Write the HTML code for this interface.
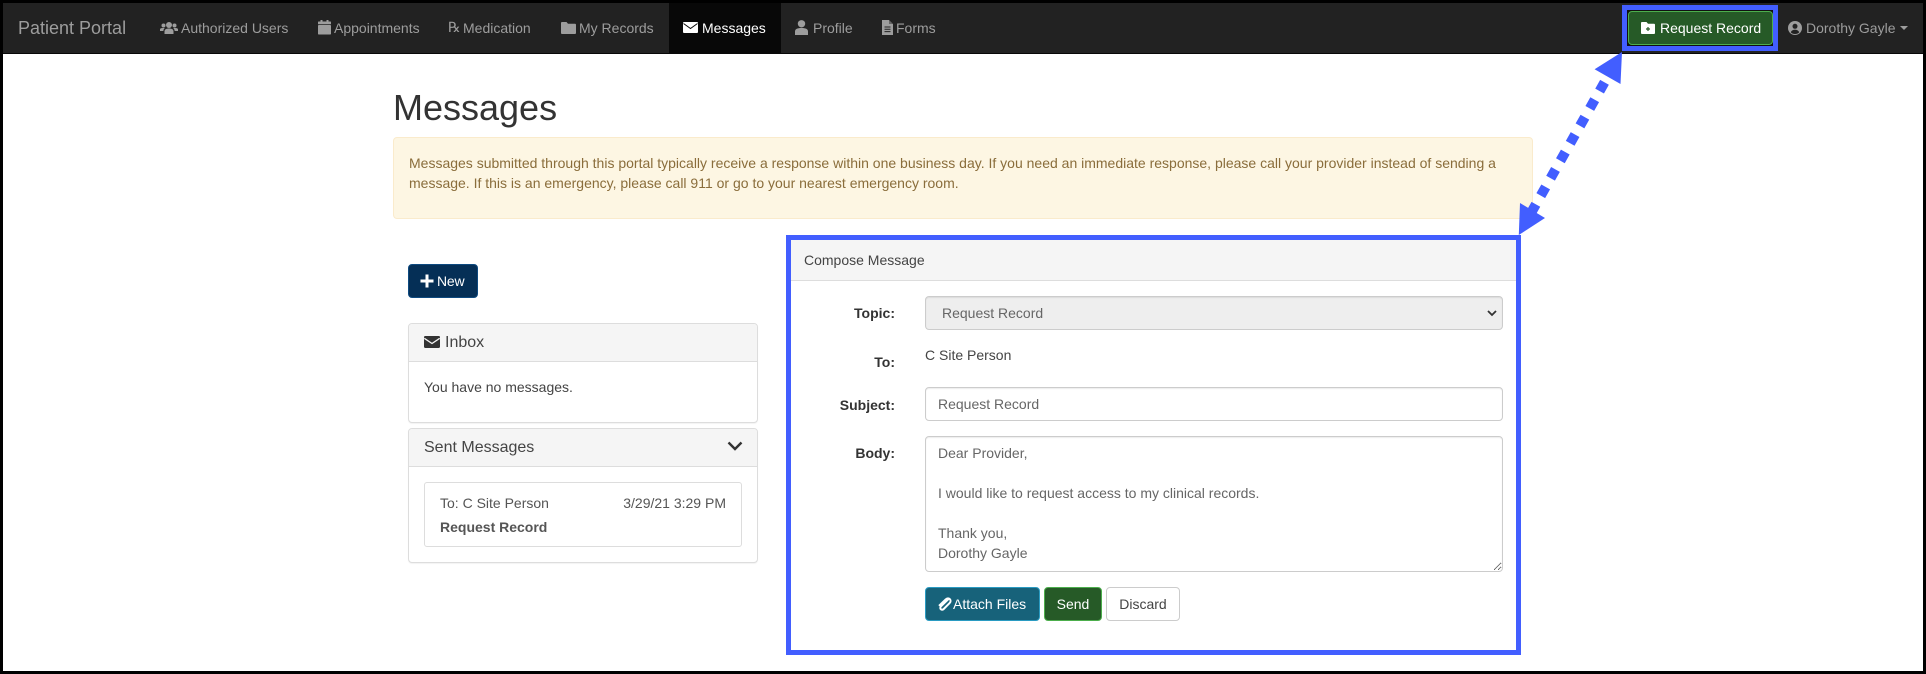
<!DOCTYPE html>
<html lang="en"><head><meta charset="utf-8"><title>Messages</title>
<style>
*{box-sizing:border-box}
html,body{margin:0;padding:0;width:1926px;height:674px;overflow:hidden;background:#000}
body{position:relative;font:14px/20px "Liberation Sans",sans-serif;color:#444}
#page{position:absolute;left:3px;top:3px;width:1920px;height:668px;background:#fff}
.a{position:absolute;white-space:nowrap;line-height:20px}
svg{position:absolute;display:block;overflow:visible}
.nav{color:#9d9d9d}
.box{position:absolute;border:1px solid #ddd;border-radius:4px;background:#fff}
.hd{position:absolute;background:#f5f5f5;border-bottom:1px solid #ddd}
.b{font-weight:bold;color:#333}
.ctl{position:absolute;font:14px/20px "Liberation Sans",sans-serif;color:#666;border:1px solid #ccc;border-radius:4px;background:#fff;padding:6px 12px;margin:0;outline:0;box-shadow:inset 0 1px 1px rgba(0,0,0,.075)}
.btn{position:absolute;border-radius:4px;height:34px;line-height:32px;text-align:center;white-space:nowrap}
</style></head><body>
<div id="page"></div>

<!-- navbar -->
<div style="position:absolute;left:3px;top:3px;width:1920px;height:51px;background:#222;border-bottom:1px solid #080808"></div>
<div class="a nav" style="left:18px;top:18px;font-size:18px">Patient Portal</div>

<svg style="left:160px;top:21px" width="18" height="14" viewBox="0 0 18 14" fill="#9d9d9d"><circle cx="9" cy="4" r="3"/><path d="M4.500 13v-2.500C4.500 8.500 6 7.500 9 7.500s4.500 1 4.500 3V13z"/><circle cx="3.500" cy="4.500" r="2"/><circle cx="14.500" cy="4.500" r="2"/><path d="M0 10V8.500C0 7.300 1.300 7 3.500 7c.4 0 .8 0 1.200.1C3.700 8 3.400 9 3.400 10zM18 10V8.500C18 7.300 16.700 7 14.500 7c-.4 0-.8 0-1.200.1 1 .9 1.300 1.900 1.300 2.900z"/></svg>
<div class="a nav" style="left:181px;top:18px">Authorized Users</div>

<svg style="left:318px;top:20px" width="13" height="15" viewBox="0 0 13 15" fill="#9d9d9d"><rect x="2.500" y="0" width="2" height="3"/><rect x="8.500" y="0" width="2" height="3"/><rect x="0" y="1.500" width="13" height="2.800" rx=".6"/><rect x="0" y="5" width="13" height="9.500" rx=".8"/></svg>
<div class="a nav" style="left:334px;top:18px">Appointments</div>

<div class="a nav" style="left:448px;top:18px;font-family:'DejaVu Serif',serif;font-size:14px;width:13px">℞</div>
<div class="a nav" style="left:463px;top:18px">Medication</div>

<svg style="left:561px;top:22px" width="15" height="12" viewBox="0 0 15 12" fill="#9d9d9d"><path d="M1 0h4.500l1.500 1.700h7c.6 0 1 .4 1 1V11c0 .6-.4 1-1 1H1c-.6 0-1-.4-1-1V1c0-.6.4-1 1-1z"/></svg>
<div class="a nav" style="left:579px;top:18px">My Records</div>

<div style="position:absolute;left:669px;top:3px;width:112px;height:50px;background:#080808"></div>
<svg style="left:683px;top:22px" width="15" height="11" viewBox="0 0 15 11"><rect width="15" height="11" rx="1" fill="#fff"/><path d="M.5 1.500l7 5 7-5" fill="none" stroke="#080808" stroke-width="1"/></svg>
<div class="a" style="left:702px;top:18px;color:#fff">Messages</div>

<svg style="left:795px;top:20px" width="13" height="15" viewBox="0 0 13 15" fill="#9d9d9d"><circle cx="6.500" cy="3.800" r="3.700"/><path d="M0 15v-3.500C0 9.300 2 8 6.500 8s6.500 1.300 6.500 3.500V15z"/></svg>
<div class="a nav" style="left:813px;top:18px">Profile</div>

<svg style="left:882px;top:20px" width="11" height="15" viewBox="0 0 11 15"><path d="M0 0h7l4 4v11H0z" fill="#9d9d9d"/><path d="M7 0v4h4" fill="#222" opacity=".45"/><path d="M2.500 7h6M2.500 9.300h6M2.500 11.600h6" stroke="#222" stroke-width="1"/></svg>
<div class="a nav" style="left:896px;top:18px">Forms</div>

<!-- request record -->
<div style="position:absolute;left:1627px;top:10px;width:147px;height:36px;background:#111"></div>
<div class="btn" style="left:1628px;top:11px;width:145px;height:34px;background:#265a27;border:1px solid #4cae4c;color:#fff"></div>
<svg style="left:1641px;top:22px" width="14" height="12" viewBox="0 0 14 12"><path d="M1 0h4.500l1.500 1.700h6c.6 0 1 .4 1 1V11c0 .6-.4 1-1 1H1c-.6 0-1-.4-1-1V1c0-.6.4-1 1-1z" fill="#fff"/><path d="M5 7h4M7 5v4" stroke="#265a27" stroke-width="1.200"/></svg>
<div class="a" style="left:1660px;top:18px;color:#fff">Request Record</div>
<div style="position:absolute;left:1622px;top:5px;width:156px;height:46px;border:5px solid #425eff"></div>

<svg style="left:1788px;top:21px" width="14" height="14" viewBox="0 0 14 14"><circle cx="7" cy="7" r="7" fill="#9d9d9d"/><circle cx="7" cy="5.300" r="2.500" fill="#222"/><path d="M2.800 11.400C3.500 9.500 5 8.800 7 8.800s3.500.7 4.200 2.600A6 6 0 0 1 7 13a6 6 0 0 1-4.200-1.600z" fill="#222"/></svg>
<div class="a nav" style="left:1806px;top:18px">Dorothy Gayle</div>
<svg style="left:1900px;top:26px" width="8" height="4" viewBox="0 0 8 4"><path d="M0 0h8L4 4z" fill="#9d9d9d"/></svg>

<!-- heading -->
<div class="a" style="left:393px;top:88px;font-size:36px;line-height:40px;font-weight:500;color:#333">Messages</div>

<!-- alert -->
<div style="position:absolute;left:393px;top:137px;width:1140px;height:82px;border:1px solid #faebcc;border-radius:4px;background:#fdf6e3"></div>
<div class="a" style="left:409px;top:153px;color:#8a6d3b">Messages submitted through this portal typically receive a response within one business day. If you need an immediate response, please call your provider instead of sending a</div>
<div class="a" style="left:409px;top:173px;color:#8a6d3b">message. If this is an emergency, please call 911 or go to your nearest emergency room.</div>

<!-- arrow -->
<svg style="left:0;top:0" width="1926" height="674">
<line x1="1604.500" y1="82.300" x2="1531" y2="213" stroke="#425eff" stroke-width="10" stroke-dasharray="10 10"/>
<polygon points="1622,52 1594.600,69.300 1620.500,84" fill="#425eff"/>
<polygon points="1518.800,235 1520,203 1545,218" fill="#425eff"/>
</svg>

<!-- new -->
<div class="btn" style="left:408px;top:264px;width:70px;background:#052f56;border:1px solid #0e4a80;color:#fff"></div>
<svg style="left:420px;top:274px" width="14" height="14" viewBox="0 0 14 14"><path d="M7 .5v13M.5 7h13" stroke="#fff" stroke-width="3"/></svg>
<div class="a" style="left:437px;top:271px;color:#fff;letter-spacing:-.2px">New</div>

<!-- inbox -->
<div class="box" style="left:408px;top:323px;width:350px;height:100px;box-shadow:0 1px 1px rgba(0,0,0,.05)"></div>
<div class="hd" style="left:409px;top:324px;width:348px;height:38px;border-radius:3px 3px 0 0"></div>
<svg style="left:424px;top:336px" width="16" height="12" viewBox="0 0 16 12"><rect width="16" height="12" rx="1.200" fill="#333"/><path d="M.3 2.300L8 7.500l7.700-5.200" fill="none" stroke="#f5f5f5" stroke-width="1.300"/></svg>
<div class="a" style="left:445px;top:333px;font-size:16px">Inbox</div>
<div class="a" style="left:424px;top:377px">You have no messages.</div>

<!-- sent -->
<div class="box" style="left:408px;top:428px;width:350px;height:135px;box-shadow:0 1px 1px rgba(0,0,0,.05)"></div>
<div class="hd" style="left:409px;top:429px;width:348px;height:38px;border-radius:3px 3px 0 0"></div>
<div class="a" style="left:424px;top:438px;font-size:16px">Sent Messages</div>
<svg style="left:727px;top:441px" width="16" height="10" viewBox="0 0 16 10"><path d="M1.500 1.500L8 8l6.500-6.500" fill="none" stroke="#333" stroke-width="2.400"/></svg>
<div class="box" style="left:424px;top:482px;width:318px;height:65px;border-radius:3px"></div>
<div class="a" style="left:440px;top:493px;color:#555">To: C Site Person</div>
<div class="a" style="right:1200px;top:493px;color:#555">3/29/21 3:29 PM</div>
<div class="a b" style="left:440px;top:517px;color:#555">Request Record</div>

<!-- compose -->
<div class="hd" style="left:791px;top:240px;width:725px;height:41px"></div>
<div class="a" style="left:804px;top:250px">Compose Message</div>
<div style="position:absolute;left:786px;top:235px;width:735px;height:420px;border:5px solid #425eff"></div>

<div class="a b" style="right:1031px;top:303px">Topic:</div>
<select disabled class="ctl" style="left:925px;top:296px;width:578px;height:34px;background:#eee;padding:6px 12px 6px 16px;appearance:none;-webkit-appearance:none;opacity:1;color:#666"><option>Request Record</option></select>
<svg style="left:1487px;top:310px" width="10" height="7" viewBox="0 0 10 7"><path d="M1 1l4 4 4-4" fill="none" stroke="#333" stroke-width="1.800"/></svg>

<div class="a b" style="right:1031px;top:352px">To:</div>
<div class="a" style="left:925px;top:345px">C Site Person</div>

<div class="a b" style="right:1031px;top:395px">Subject:</div>
<input class="ctl" style="left:925px;top:387px;width:578px;height:34px" value="Request Record">

<div class="a b" style="right:1031px;top:443px">Body:</div>
<textarea class="ctl" style="left:925px;top:436px;width:578px;height:136px">Dear Provider,

I would like to request access to my clinical records.

Thank you,
Dorothy Gayle</textarea>

<div class="btn" style="left:925px;top:587px;width:115px;background:#17627a;border:1px solid #2a9bc2;color:#fff"></div>
<svg style="left:938px;top:597px" width="13" height="14" viewBox="0 0 13 14"><path d="M10.500 2L3 9.300c-.9.9-.9 2.200-.2 2.900s2 .7 2.900-.2l5.900-5.900c1.300-1.300 1.200-3 .2-4s-2.700-1.100-4 .2L1 8.800" fill="none" stroke="#fff" stroke-width="2"/></svg>
<div class="a" style="left:953px;top:594px;color:#fff">Attach Files</div>
<div class="btn" style="left:1044px;top:587px;width:58px;background:#265a27;border:1px solid #4cae4c;color:#fff">Send</div>
<div class="btn" style="left:1106px;top:587px;width:74px;background:#fff;border:1px solid #ccc;color:#444">Discard</div>
</body></html>
